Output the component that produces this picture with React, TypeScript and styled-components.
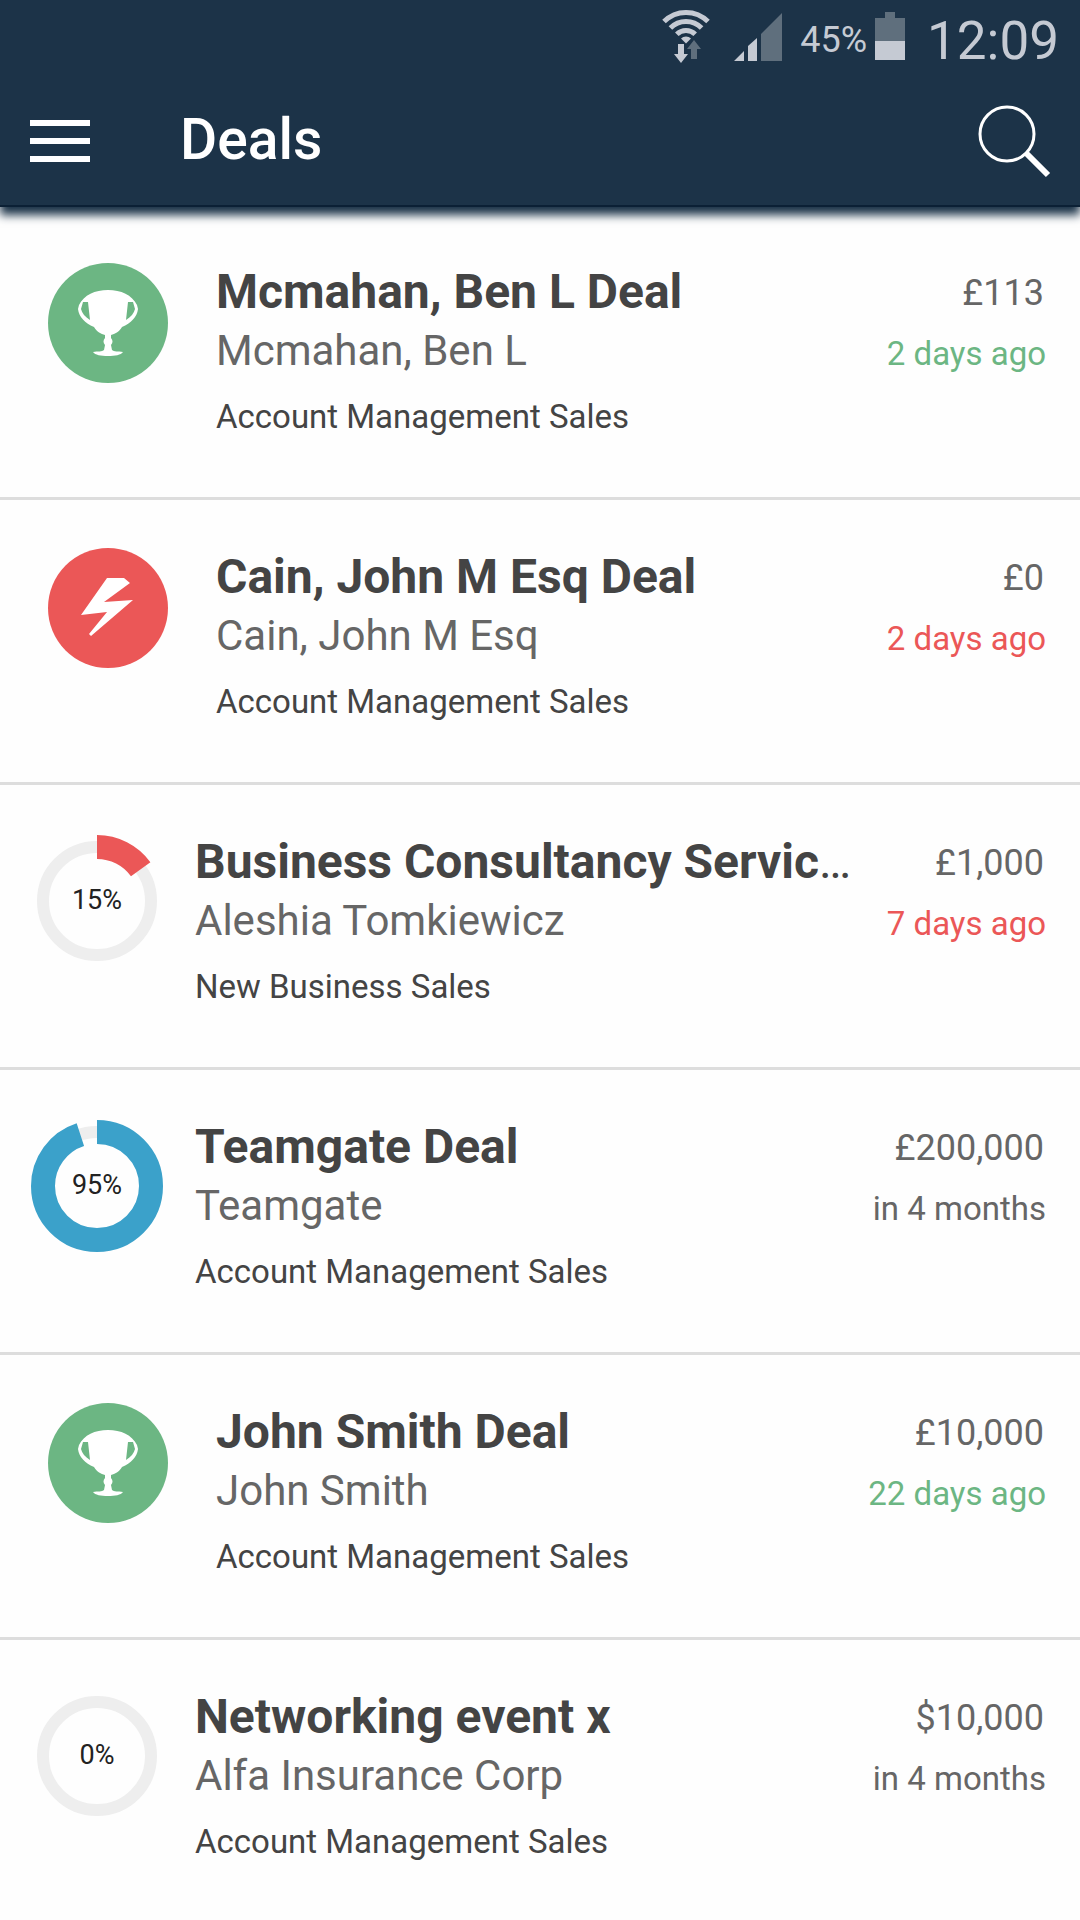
import React from "react";
import styled, { createGlobalStyle } from "styled-components";

const colors = {
  navy: "#1c3348",
  green: "#6cb683",
  red: "#eb5757",
  blue: "#3ba1ca",
  grey: "#666666",
  dark: "#444444",
  track: "#eeeeee",
  status: "#c5cad3",
  statusDim: "#5f6f7d",
};

const GlobalStyle = createGlobalStyle`
  *, *::before, *::after { box-sizing: border-box; }
  body {
    margin: 0;
    background: #fefefe;
    font-family: Roboto, "Noto Sans", sans-serif;
    overflow-x: hidden;
  }
`;

const Header = styled.header`
  position: relative;
  background: ${colors.navy};
  border-bottom: 2px solid #0b2035;
  box-shadow: 0 8px 9px 0 #1c3348;
`;

const StatusBar = styled.div`
  display: flex;
  align-items: center;
  justify-content: flex-end;
  height: 77px;
  padding: 0 21px 0 0;
  color: ${colors.status};
`;

const StatusIcons = styled.svg`
  display: block;
  margin-right: 18px;
`;

const BatteryIcon = styled.svg`
  display: block;
  margin: 0 22px 0 8px;
`;

const BatteryLevel = styled.span`
  padding-top: 3px;
  font-size: 36px;
  line-height: 48px;
`;

const Clock = styled.time`
  padding-top: 4px;
  font-size: 53px;
  line-height: 68px;
`;

const AppBar = styled.div`
  display: flex;
  align-items: center;
  height: 128px;
  padding: 0 29px 0 30px;
`;

const IconButton = styled.button`
  display: flex;
  align-items: center;
  padding: 0;
  border: 0;
  background: none;
  color: #ffffff;
  cursor: pointer;
`;

const PageTitle = styled.h1`
  flex: 1;
  margin: 0 0 2px 90px;
  color: #ffffff;
  font-size: 57px;
  font-weight: 500;
  line-height: 68px;
`;

const DealList = styled.ul`
  margin: 0;
  padding: 8px 0 0;
  list-style: none;
`;

const DealRow = styled.li<{ $open: boolean }>`
  display: grid;
  grid-template-columns: ${(p) => (p.$open ? "132px" : "120px")} minmax(0, 1fr) auto;
  column-gap: ${(p) => (p.$open ? "32px" : "48px")};
  align-items: start;
  height: 285px;
  padding: 47px 34px 0 ${(p) => (p.$open ? "31px" : "48px")};
  border-bottom: 3px solid #dddddd;

  &:last-child {
    border-bottom: 0;
  }
`;

const Badge = styled.div<{ $color: string }>`
  width: 120px;
  height: 120px;
  margin-top: 1px;
  border-radius: 50%;
  background: ${(p) => p.$color};
`;

const Ring = styled.svg`
  display: block;
  margin-top: 3px;
  font-size: 27px;
`;

const Details = styled.div`
  display: flex;
  flex-direction: column;
`;

/* The regular weight of the heading applies to the ellipsis of a long name. */
const DealTitle = styled.h2`
  margin: 0;
  overflow: hidden;
  color: ${colors.dark};
  font-size: 48px;
  font-weight: 400;
  line-height: 60px;
  text-overflow: ellipsis;
  white-space: nowrap;

  strong {
    font-weight: 700;
  }
`;

const Contact = styled.p`
  margin: 0;
  color: ${colors.grey};
  font-size: 42px;
  line-height: 58px;
`;

const Pipeline = styled.p`
  margin: 13px 0 0;
  color: ${colors.dark};
  font-size: 33px;
  line-height: 48px;
`;

const Meta = styled.div`
  display: flex;
  flex-direction: column;
  gap: 13px;
  min-width: 160px;
  padding-top: 7px;
  text-align: right;
  line-height: 48px;
`;

const Amount = styled.span`
  padding-right: 2px;
  color: ${colors.grey};
  font-size: 36px;
`;

const DueDate = styled.span<{ $color: string }>`
  color: ${(p) => p.$color};
  font-size: 33px;
`;

type Status = "won" | "lost" | "open";

interface Deal {
  title: string;
  contact: string;
  pipeline: string;
  amount: string;
  due: string;
  dueColor: string;
  status: Status;
  progress?: number;
  progressColor?: string;
}

const deals: Deal[] = [
  { title: "Mcmahan, Ben L Deal", contact: "Mcmahan, Ben L", pipeline: "Account Management Sales", amount: "£113", due: "2 days ago", dueColor: colors.green, status: "won" },
  { title: "Cain, John M Esq Deal", contact: "Cain, John M Esq", pipeline: "Account Management Sales", amount: "£0", due: "2 days ago", dueColor: colors.red, status: "lost" },
  { title: "Business Consultancy Services", contact: "Aleshia Tomkiewicz", pipeline: "New Business Sales", amount: "£1,000", due: "7 days ago", dueColor: colors.red, status: "open", progress: 15, progressColor: colors.red },
  { title: "Teamgate Deal", contact: "Teamgate", pipeline: "Account Management Sales", amount: "£200,000", due: "in 4 months", dueColor: colors.grey, status: "open", progress: 95, progressColor: colors.blue },
  { title: "John Smith Deal", contact: "John Smith", pipeline: "Account Management Sales", amount: "£10,000", due: "22 days ago", dueColor: colors.green, status: "won" },
  { title: "Networking event x", contact: "Alfa Insurance Corp", pipeline: "Account Management Sales", amount: "$10,000", due: "in 4 months", dueColor: colors.grey, status: "open", progress: 0, progressColor: colors.blue },
];

function ProgressRing({ value, color }: { value: number; color: string }) {
  return (
    <Ring width="132" height="132" viewBox="0 0 132 132" role="img" aria-label={`${value}% complete`}>
      <circle cx="66" cy="66" r="54" fill="none" stroke={colors.track} strokeWidth="12" />
      {value > 0 && (
        <circle
          cx="66"
          cy="66"
          r="54"
          fill="none"
          stroke={color}
          strokeWidth="24"
          pathLength={100}
          strokeDasharray={`${value} 100`}
          transform="rotate(-90 66 66)"
        />
      )}
      <text x="66" y="74" textAnchor="middle" fill="#222222">{value}%</text>
    </Ring>
  );
}

function WonBadge() {
  return (
    <Badge $color={colors.green}>
      <svg width="120" height="120" viewBox="0 0 120 120" role="img" aria-label="Won">
        <path
          fill="#ffffff"
          d="M60 27C73 27 84 32 89 42L90 46C89 54 83 60 74 64C71 69 67 71 63 72V75C65 77 65 80 63 82L64 87C66 89 70 88 75 89C73 92 67 93 60 93S47 92 45 89C50 88 54 89 56 87L57 82C55 80 55 77 57 75V72C53 71 49 69 46 64C37 60 31 54 30 46L31 42C36 32 47 27 60 27Z"
        />
        <path fill={colors.green} d="M35 39H40L42 57C37 54 34 50 33 46ZM85 39H80L78 57C83 54 86 50 87 46Z" />
      </svg>
    </Badge>
  );
}

function LostBadge() {
  return (
    <Badge $color={colors.red}>
      <svg width="120" height="120" viewBox="0 0 120 120" role="img" aria-label="Lost">
        <path fill="#ffffff" d="M59 30H76L82 35L56 54L85 52L43 88L41 86L59 64L33 67Z" />
      </svg>
    </Badge>
  );
}

function StatusMark({ deal }: { deal: Deal }) {
  if (deal.status === "won") return <WonBadge />;
  if (deal.status === "lost") return <LostBadge />;
  return <ProgressRing value={deal.progress ?? 0} color={deal.progressColor ?? colors.blue} />;
}

export default function App() {
  return (
    <>
      <GlobalStyle />
      <Header>
        <StatusBar>
          <StatusIcons width="122" height="77" viewBox="0 0 122 77" aria-hidden="true">
            <g fill="none" stroke={colors.status} strokeWidth="5">
              <path d="M4 21.6A31 31 0 0 1 48 21.6" />
              <path d="M10.4 27.9A22 22 0 0 1 41.6 27.9" />
              <path d="M16.8 34.3A13 13 0 0 1 35.2 34.3" />
            </g>
            <path fill={colors.status} d="M21 38.6A7 7 0 0 1 31 38.6L26 43.5Z" />
            <path fill={colors.status} d="M18 44H24V54H28L21 63L14 54H18Z" />
            <path fill={colors.statusDim} d="M31 59H37V49H41L34 40L27 49H31Z" />
            <path fill={colors.status} d="M74 61L84 51V61ZM88 46L97 38V61H88Z" />
            <path fill={colors.statusDim} d="M101 34L122 13V61H101Z" />
          </StatusIcons>
          <BatteryLevel>45%</BatteryLevel>
          <BatteryIcon width="30" height="77" viewBox="0 0 30 77" aria-hidden="true">
            <path fill={colors.statusDim} d="M0 18H10V12H20V18H30V60H0Z" />
            <path fill={colors.status} d="M0 41H30V60H0Z" />
          </BatteryIcon>
          <Clock>12:09</Clock>
        </StatusBar>
        <AppBar>
          <IconButton type="button" aria-label="Open menu">
            <svg width="60" height="44" viewBox="0 0 60 44">
              <path fill="#ffffff" d="M0 1H60V7H0ZM0 19H60V25H0ZM0 37H60V43H0Z" />
            </svg>
          </IconButton>
          <PageTitle>Deals</PageTitle>
          <IconButton type="button" aria-label="Search">
            <svg width="73" height="73" viewBox="0 0 73 73" fill="none" stroke="#ffffff">
              <circle cx="29" cy="29" r="27" strokeWidth="3" />
              <path d="M48 48L70 70" strokeWidth="6" />
            </svg>
          </IconButton>
        </AppBar>
      </Header>
      <main>
        <DealList>
          {deals.map((deal) => (
            <DealRow key={deal.title} $open={deal.status === "open"}>
              <StatusMark deal={deal} />
              <Details>
                <DealTitle><strong>{deal.title}</strong></DealTitle>
                <Contact>{deal.contact}</Contact>
                <Pipeline>{deal.pipeline}</Pipeline>
              </Details>
              <Meta>
                <Amount>{deal.amount}</Amount>
                <DueDate $color={deal.dueColor}>{deal.due}</DueDate>
              </Meta>
            </DealRow>
          ))}
        </DealList>
      </main>
    </>
  );
}
